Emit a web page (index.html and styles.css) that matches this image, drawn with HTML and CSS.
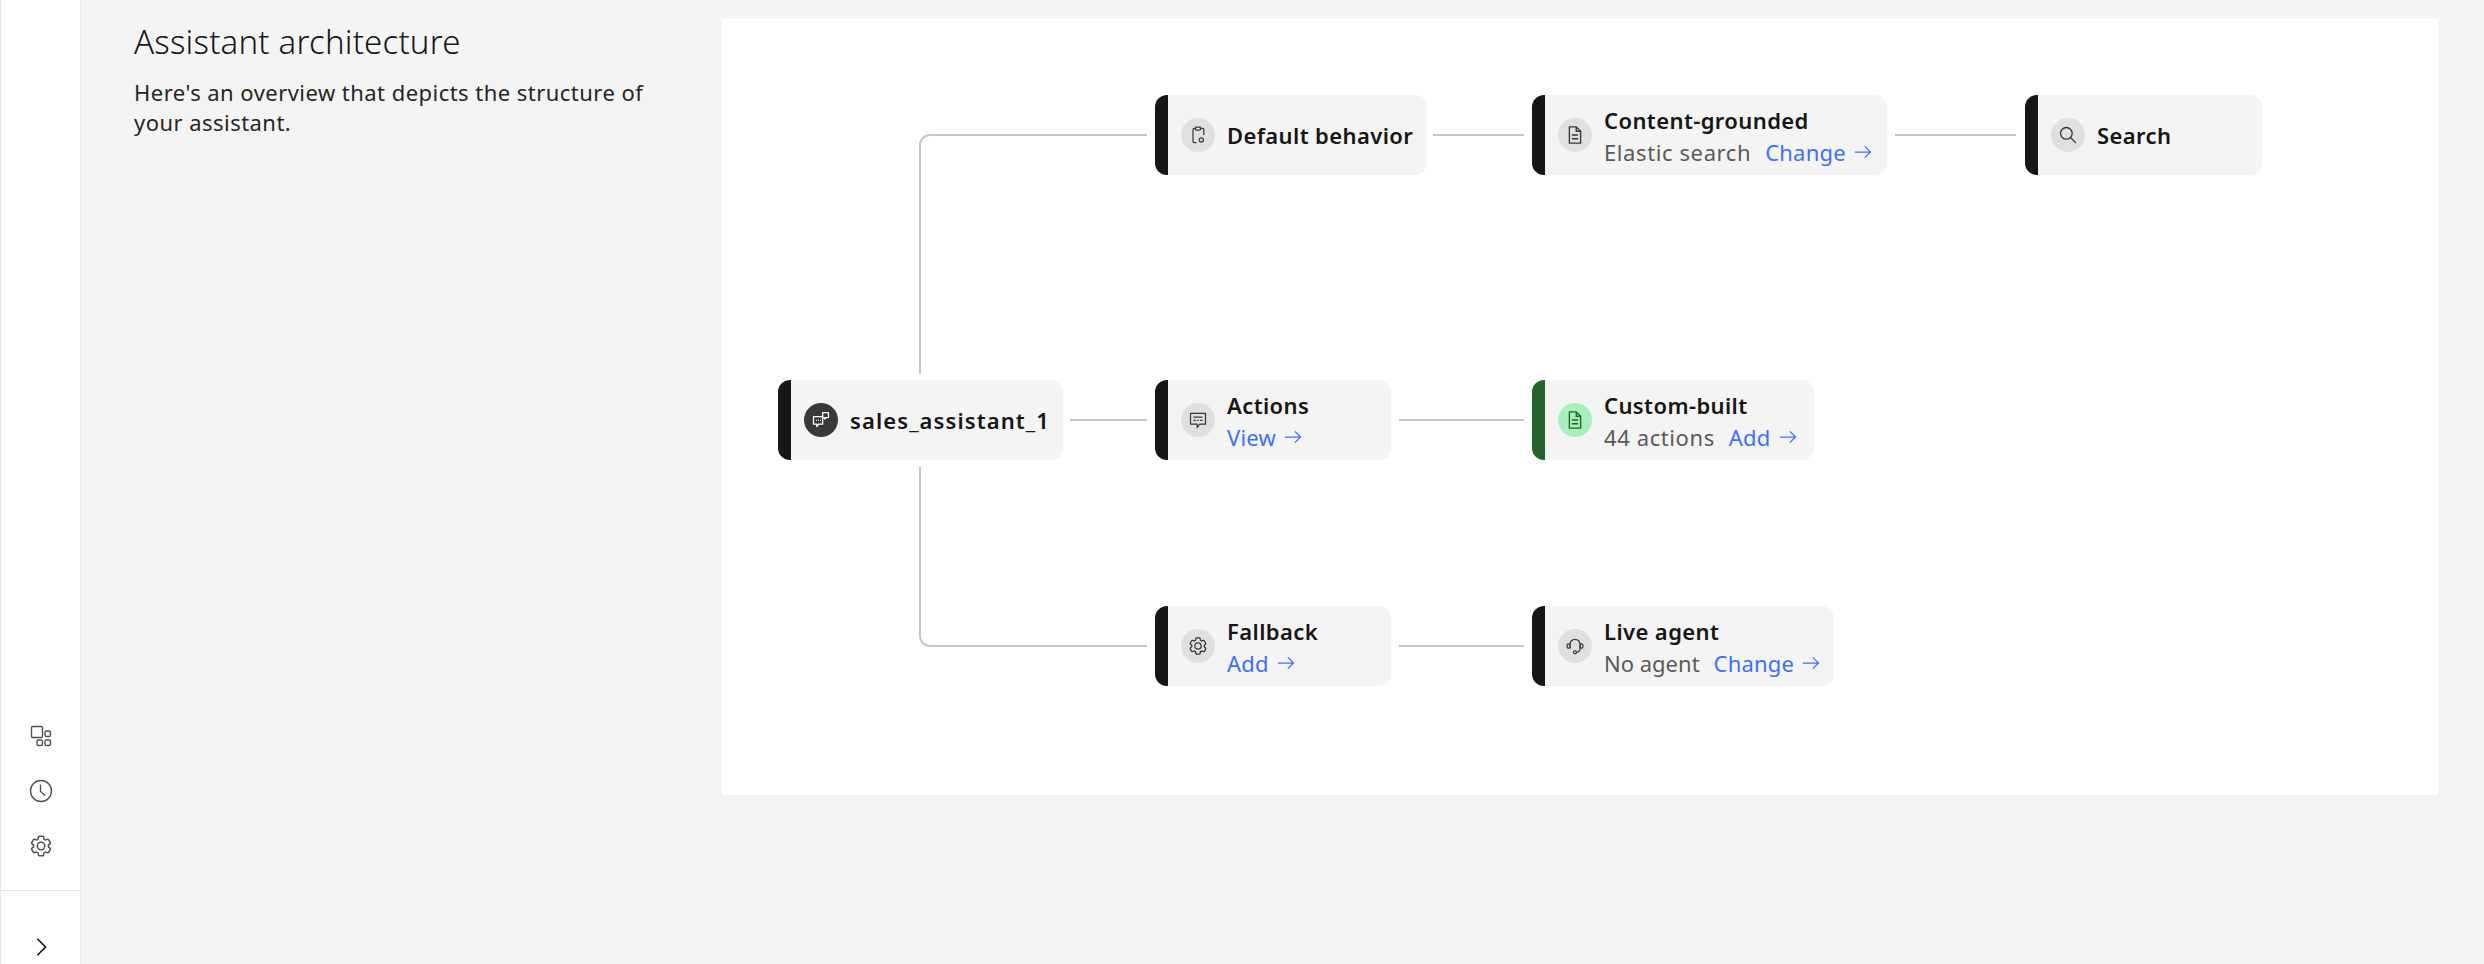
FILE: index.html
```html
<!DOCTYPE html>
<html lang="en">
<head>
    <meta charset="UTF-8">
    <meta name="viewport" content="width=device-width, initial-scale=1.0">
    <title>Assistant architecture</title>
    <link rel="stylesheet" href="styles.css">
</head>
<body>
    <svg class="icon-defs" width="0" height="0" aria-hidden="true">
        <symbol id="i-gear" viewBox="0 0 32 32">
            <path fill="currentColor" d="M27,16.76c0-.25,0-.5,0-.76s0-.51,0-.77l1.92-1.68A2,2,0,0,0,29.3,11L26.94,7a2,2,0,0,0-1.73-1,2,2,0,0,0-.64.1l-2.43.82a11.35,11.35,0,0,0-1.31-.75l-.51-2.52a2,2,0,0,0-2-1.61H13.64a2,2,0,0,0-2,1.61l-.51,2.52a11.48,11.48,0,0,0-1.32.75L7.43,6.06A2,2,0,0,0,6.79,6,2,2,0,0,0,5.06,7L2.7,11a2,2,0,0,0,.41,2.51L5,15.24c0,.25,0,.5,0,.76s0,.51,0,.77L3.11,18.45A2,2,0,0,0,2.7,21L5.06,25a2,2,0,0,0,1.73,1,2,2,0,0,0,.64-.1l2.43-.82a11.35,11.35,0,0,0,1.31.75l.51,2.52a2,2,0,0,0,2,1.61h4.72a2,2,0,0,0,2-1.61l.51-2.52a11.48,11.48,0,0,0,1.32-.75l2.42.82a2,2,0,0,0,.64.1,2,2,0,0,0,1.73-1L29.3,21a2,2,0,0,0-.41-2.51ZM25.21,24l-3.43-1.16a8.86,8.86,0,0,1-2.71,1.57L18.36,28H13.64l-.71-3.55a9.36,9.36,0,0,1-2.7-1.57L6.79,24,4.43,20l2.72-2.4a8.9,8.9,0,0,1,0-3.13L4.43,12,6.79,8l3.43,1.16a8.86,8.86,0,0,1,2.71-1.57L13.64,4h4.72l.71,3.55a9.36,9.36,0,0,1,2.7,1.57L25.21,8,27.57,12l-2.72,2.4a8.9,8.9,0,0,1,0,3.13L27.57,20Z"/>
            <path fill="currentColor" d="M16,22a6,6,0,1,1,6-6A5.94,5.94,0,0,1,16,22Zm0-10a3.91,3.91,0,0,0-4,4,3.91,3.91,0,0,0,4,4,3.91,3.91,0,0,0,4-4A3.91,3.91,0,0,0,16,12Z"/>
        </symbol>
        <symbol id="i-doc" viewBox="0 0 32 32">
            <g fill="none" stroke="currentColor" stroke-width="2.2">
                <path d="M7 3h11l7 7v19H7z" stroke-linejoin="round"/>
                <path d="M18 3v7h7M11 16h10M11 22h10"/>
            </g>
        </symbol>
        <symbol id="i-arrow" viewBox="0 0 32 32">
            <path fill="none" stroke="currentColor" stroke-width="2" d="M3 16h25M19 7l9 9-9 9"/>
        </symbol>
    </svg>

    <aside class="sidebar">
        <div class="side-icons">
            <svg class="side-icon" viewBox="0 0 24 24" fill="none" stroke="currentColor" stroke-width="1.4">
                <rect x="2.5" y="2.5" width="11" height="11" rx="1.2"/>
                <rect x="16" y="7" width="5.5" height="5.5" rx="1.5"/>
                <rect x="8" y="16" width="5.5" height="5.5" rx="1.5"/>
                <rect x="16" y="16" width="5.5" height="5.5" rx="1.5"/>
            </svg>
            <svg class="side-icon" viewBox="0 0 24 24" fill="none" stroke="currentColor" stroke-width="1.4">
                <circle cx="12" cy="12" r="10.5"/>
                <path d="M11.5 5.5V12.5l4.5 4"/>
            </svg>
            <svg class="side-icon"><use href="#i-gear"/></svg>
        </div>
        <div class="side-toggle">
            <svg class="chevron" viewBox="0 0 24 24" fill="none" stroke="currentColor" stroke-width="1.8">
                <path d="M8 3l9 9-9 9"/>
            </svg>
        </div>
    </aside>

    <main class="main">
        <section class="intro">
            <h1>Assistant architecture</h1>
            <p>Here's an overview that depicts the structure of your assistant.</p>
        </section>

        <section class="canvas">
            <svg class="wires" width="1716" height="776" fill="none" stroke="#c6c6c6" stroke-width="2">
                <path d="M198 355V126a10 10 0 0 1 10-10H425"/>
                <path d="M198 448V617a10 10 0 0 0 10 10H425"/>
                <path d="M348 401H425"/>
                <path d="M711 116H802"/>
                <path d="M677 401H802"/>
                <path d="M677 627H802"/>
                <path d="M1173 116H1294"/>
            </svg>

            <div class="node node-sales">
                <span class="badge badge-dark">
                    <svg viewBox="0 0 24 24" fill="none" stroke="currentColor" stroke-width="1.5">
                        <path d="M3 8h11v9H9l-2 3v-3H3z" stroke-linejoin="round"/>
                        <path d="M6 12.5h1M8.500 12.5h1M11 12.5h1"/>
                        <path d="M14 3h7v6h-3l-1.500 2V9H14z" stroke-linejoin="round"/>
                    </svg>
                </span>
                <div class="node-text single"><strong>sales_assistant_1</strong></div>
            </div>

            <div class="node node-default">
                <span class="badge">
                    <svg viewBox="0 0 24 24" fill="none" stroke="currentColor" stroke-width="1.500">
                        <path d="M15 4h2.500A1.500 1.500 0 0 1 19 5.500V12M10 21H7.500A1.500 1.500 0 0 1 6 19.500V5.500A1.500 1.500 0 0 1 7.500 4H9"/>
                        <rect x="9" y="2.500" width="6" height="3.500" rx="1"/>
                        <circle cx="16" cy="18" r="2.500"/>
                    </svg>
                </span>
                <div class="node-text single"><strong>Default behavior</strong></div>
            </div>

            <div class="node node-content">
                <span class="badge"><svg><use href="#i-doc"/></svg></span>
                <div class="node-text">
                    <strong>Content-grounded</strong>
                    <div class="node-sub">
                        <span>Elastic search</span>
                        <a href="#">Change <svg class="arrow"><use href="#i-arrow"/></svg></a>
                    </div>
                </div>
            </div>

            <div class="node node-search">
                <span class="badge">
                    <svg viewBox="0 0 24 24" fill="none" stroke="currentColor" stroke-width="1.600">
                        <circle cx="10" cy="10" r="7"/>
                        <path d="M15 15l6.500 6.500"/>
                    </svg>
                </span>
                <div class="node-text single"><strong>Search</strong></div>
            </div>

            <div class="node node-actions">
                <span class="badge">
                    <svg viewBox="0 0 24 24" fill="none" stroke="currentColor" stroke-width="1.500">
                        <path d="M3 4h18v13h-7l-3 4v-4H3z" stroke-linejoin="round"/>
                        <path d="M6.500 8.500h11M6.500 12.500h3M11 12.500h2M14.500 12.500h3"/>
                    </svg>
                </span>
                <div class="node-text">
                    <strong>Actions</strong>
                    <div class="node-sub"><a href="#">View <svg class="arrow"><use href="#i-arrow"/></svg></a></div>
                </div>
            </div>

            <div class="node node-custom">
                <span class="badge badge-green"><svg><use href="#i-doc"/></svg></span>
                <div class="node-text">
                    <strong>Custom-built</strong>
                    <div class="node-sub">
                        <span>44 actions</span>
                        <a href="#">Add <svg class="arrow"><use href="#i-arrow"/></svg></a>
                    </div>
                </div>
            </div>

            <div class="node node-fallback">
                <span class="badge"><svg><use href="#i-gear"/></svg></span>
                <div class="node-text">
                    <strong>Fallback</strong>
                    <div class="node-sub"><a href="#">Add <svg class="arrow"><use href="#i-arrow"/></svg></a></div>
                </div>
            </div>

            <div class="node node-live">
                <span class="badge">
                    <svg viewBox="0 0 24 24" fill="none" stroke="currentColor" stroke-width="1.500">
                        <path d="M6 15V10a6 6 0 0 1 12 0v5c0 3-2 4.500-4.500 4.500"/>
                        <rect x="2.500" y="9.500" width="3.500" height="5" rx="1.500"/>
                        <rect x="18" y="9.500" width="3.500" height="5" rx="1.500"/>
                        <circle cx="12" cy="19.500" r="1.800"/>
                    </svg>
                </span>
                <div class="node-text">
                    <strong>Live agent</strong>
                    <div class="node-sub">
                        <span>No agent</span>
                        <a href="#">Change <svg class="arrow"><use href="#i-arrow"/></svg></a>
                    </div>
                </div>
            </div>
        </section>
    </main>
</body>
</html>
```

FILE: styles.css
```css
* {
    box-sizing: border-box;
}

body {
    font-family: "Noto Sans", Roboto, Arial, sans-serif;
    background-color: #f4f4f4;
    color: #161616;
    display: flex;
    height: 100vh;
    margin: 0;
    overflow: hidden;
}

.icon-defs {
    position: absolute;
}

/* left rail */
.sidebar {
    width: 81px;
    flex: none;
    background: #fff;
    border-left: 1px solid #e8e8e8;
    border-right: 1px solid #ececec;
    display: flex;
    flex-direction: column;
    justify-content: flex-end;
}

.side-icons {
    display: flex;
    flex-direction: column;
    align-items: center;
    gap: 31px;
    padding-bottom: 32px;
    color: #525252;
}

.side-icon {
    width: 24px;
    height: 24px;
}

.side-toggle {
    height: 74px;
    border-top: 1px solid #e0e0e0;
    display: flex;
    justify-content: center;
    align-items: flex-end;
    padding-bottom: 6px;
    color: #161616;
}

.chevron {
    width: 22px;
    height: 22px;
}

/* page */
.main {
    flex: 1;
    display: flex;
    align-items: flex-start;
    padding: 19px 46px 0 53px;
}

.intro {
    width: 588px;
    flex: none;
}

h1 {
    font-size: 33px;
    font-weight: 300;
    letter-spacing: 0.2px;
    line-height: 40px;
    margin: 3px 0 15px;
}

.intro p {
    font-size: 22px;
    letter-spacing: 0.46px;
    line-height: 30px;
    margin: 0;
    width: 530px;
    color: #262626;
}

/* diagram */
.canvas {
    position: relative;
    width: 1716px;
    height: 776px;
    background: #fff;
}

.wires {
    position: absolute;
    left: 0;
    top: 0;
}

.node {
    position: absolute;
    height: 80px;
    display: flex;
    align-items: center;
    gap: 12px;
    padding-left: 13px;
    background: #f4f4f4;
    border-left: 13px solid #161616;
    border-radius: 12px;
}

.node-sales { left: 56px; top: 361px; width: 285px; }
.node-default { left: 433px; top: 76px; width: 272px; }
.node-content { left: 810px; top: 76px; width: 355px; }
.node-search { left: 1303px; top: 76px; width: 237px; }
.node-actions { left: 433px; top: 361px; width: 236px; }
.node-custom { left: 810px; top: 361px; width: 282px; border-left-color: #24632c; }
.node-fallback { left: 433px; top: 587px; width: 236px; }
.node-live { left: 810px; top: 587px; width: 302px; }

.badge {
    width: 34px;
    height: 34px;
    flex: none;
    border-radius: 50%;
    background: #e0e0e0;
    color: #393939;
    display: flex;
    align-items: center;
    justify-content: center;
}

.badge svg {
    width: 20px;
    height: 20px;
}

.badge-dark {
    background: #393939;
    color: #fff;
}

.badge-green {
    background: #a7f0ba;
    color: #24632c;
}

.node-text {
    padding-top: 2px;
}

.node-text.single {
    padding-top: 0;
}

.node-text strong {
    display: block;
    font-size: 22px;
    font-weight: 600;
    letter-spacing: 0.4px;
    line-height: 32px;
}

.node-sales strong {
    letter-spacing: 1.1px;
}

.node-sub {
    display: flex;
    gap: 14px;
    font-size: 22px;
    letter-spacing: 0.6px;
    line-height: 32px;
    color: #5a5a5a;
}

.node-live .node-sub {
    letter-spacing: 0;
}

.node-sub a {
    color: #4070f4;
    letter-spacing: 0.2px;
    text-decoration: none;
    display: flex;
    align-items: center;
    gap: 6px;
}

.arrow {
    width: 22px;
    height: 20px;
}
```
